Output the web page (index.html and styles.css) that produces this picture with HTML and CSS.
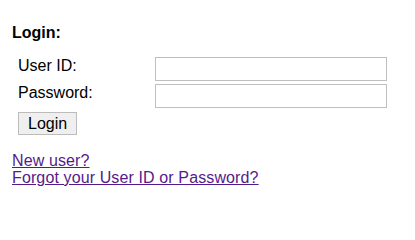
FILE: index.html
```html
<!DOCTYPE html>
<html>
<head>
<meta charset="utf-8">
<link rel="stylesheet" href="styles.css">
</head>
<body>
<div class="login-box">
  <h2 class="title">Login:</h2>
  <form class="login-form">
    <div class="fields">
      <label class="field-label" for="uid">User ID:</label>
      <input class="field-input" id="uid" type="text">
      <label class="field-label" for="pwd">Password:</label>
      <input class="field-input" id="pwd" type="password">
    </div>
    <button class="login-btn" type="button">Login</button>
  </form>
  <div class="links">
    <a class="link" href="#">New user?</a><br>
    <a class="link" href="#">Forgot your User ID or Password?</a>
  </div>
</div>
</body>
</html>
```

FILE: styles.css
```css
body {
  margin: 8px;
  background: #ffffff;
  font-family: "Liberation Sans", Arial, sans-serif;
  font-size: 16px;
  color: #000000;
}

.login-box {
  padding: 16px 0 0 4px;
}

.title {
  margin: 0;
  font-size: 16px;
  font-weight: bold;
  line-height: 18px;
}

.login-form {
  margin: 15px 0 0 6px;
}

.fields {
  display: grid;
  grid-template-columns: 137px 232px;
  row-gap: 3px;
}

.field-label {
  line-height: 18px;
  align-self: start;
}

.field-input {
  box-sizing: border-box;
  width: 232px;
  height: 24px;
  margin: 0;
  border: 1px solid #bfbfbf;
  background: #ffffff;
  padding: 0 3px;
  font-family: inherit;
  font-size: 16px;
}

.login-btn {
  display: block;
  margin-top: 4px;
  height: 23px;
  padding: 0 9px;
  border: 1px solid #bcbcbc;
  background: #efefef;
  font-family: inherit;
  font-size: 16px;
  color: #000000;
  line-height: 18px;
}

.links {
  margin-top: 17px;
  line-height: 17px;
  letter-spacing: 0.12px;
}

.link {
  color: #551a8b;
  text-decoration: underline;
}
```
